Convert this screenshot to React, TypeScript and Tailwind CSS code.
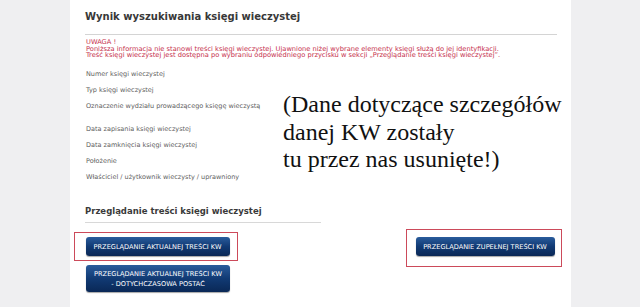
import React from "react";

const sans = { fontFamily: '"DejaVu Sans", Verdana, sans-serif' };

function Btn({ children, className = "" }: { children: React.ReactNode; className?: string }) {
  return (
    <div
      className={
        "flex flex-col items-center justify-center rounded-[3px] bg-linear-to-b from-[#2a5c9c] via-[#113a74] to-[#0a2856] text-white text-[6.6px] leading-[10px] shadow-[0_1px_1px_rgba(0,0,0,0.35)] " +
        className
      }
      style={sans}
    >
      {children}
    </div>
  );
}

export default function App() {
  const labels1 = ["Numer księgi wieczystej", "Typ księgi wieczystej", "Oznaczenie wydziału prowadzącego księgę wieczystą"];
  const labels2 = [
    "Data zapisania księgi wieczystej",
    "Data zamknięcia księgi wieczystej",
    "Położenie",
    "Właściciel / użytkownik wieczysty / uprawniony",
  ];
  return (
    <div className="relative flex h-[307px] w-[640px] overflow-hidden bg-[#efeff1]">
      <div className="ml-[70px] flex h-full w-[501px] flex-col bg-white" style={sans}>
        <div className="mx-[15px] mr-[14px] border-b border-[#d4d4d4] pt-[10px] pb-[10px]">
          <div className="text-[10px] font-bold leading-[14px] text-[#383838]">Wynik wyszukiwania księgi wieczystej</div>
        </div>
        <div className="ml-[16px] mt-[4px] text-[6.7px] leading-[6.5px] text-[#c6304c]">
          <div>UWAGA !</div>
          <div>Poniższa informacja nie stanowi treści księgi wieczystej. Ujawnione niżej wybrane elementy księgi służą do jej identyfikacji.</div>
          <div>Treść księgi wieczystej jest dostępna po wybraniu odpowiedniego przycisku w sekcji „Przeglądanie treści księgi wieczystej”.</div>
        </div>
        <div className="ml-[16px] mt-[7px] flex flex-col text-[6.5px] leading-[16px] text-[#606060]">
          {labels1.map((l) => (
            <div key={l}>{l}</div>
          ))}
          <div className="mt-[7px] flex flex-col">
            {labels2.map((l) => (
              <div key={l}>{l}</div>
            ))}
          </div>
        </div>
        <div className="ml-[15px] mt-[19px] w-[236px] border-b border-[#d8d8d8] pb-[4px]">
          <div className="text-[8.5px] font-bold leading-[14px] text-[#3a3a3a]">Przeglądanie treści księgi wieczystej</div>
        </div>
        <div className="mt-[6px] flex items-start justify-between pl-[4px] pr-[9px]">
          <div className="mt-[3px] flex flex-col">
            <div className="h-[29px] w-[164px] border-[1.5px] border-[#cc4a5a] pt-[4.5px] pl-[10.5px]">
              <Btn className="h-[19px] w-[144px]">PRZEGLĄDANIE AKTUALNEJ TREŚCI KW</Btn>
            </div>
            <Btn className="ml-[12px] mt-[4.5px] h-[27px] w-[144px]">
              <span>PRZEGLĄDANIE AKTUALNEJ TREŚCI KW</span>
              <span>- DOTYCHCZASOWA POSTAĆ</span>
            </Btn>
          </div>
          <div className="h-[38px] w-[156px] border-[1.5px] border-[#cc4a5a] pt-[7.5px] pl-[8.5px]">
            <Btn className="h-[19px] w-[139px]">PRZEGLĄDANIE ZUPEŁNEJ TREŚCI KW</Btn>
          </div>
        </div>
      </div>
      <div
        className="absolute left-[283px] top-[91px] text-[24px] leading-[27.5px] text-[#111]"
        style={{ fontFamily: '"Liberation Serif", "Times New Roman", serif' }}
      >
        <div>(Dane dotyczące szczegółów</div>
        <div>danej KW zostały</div>
        <div>tu przez nas usunięte!)</div>
      </div>
    </div>
  );
}
